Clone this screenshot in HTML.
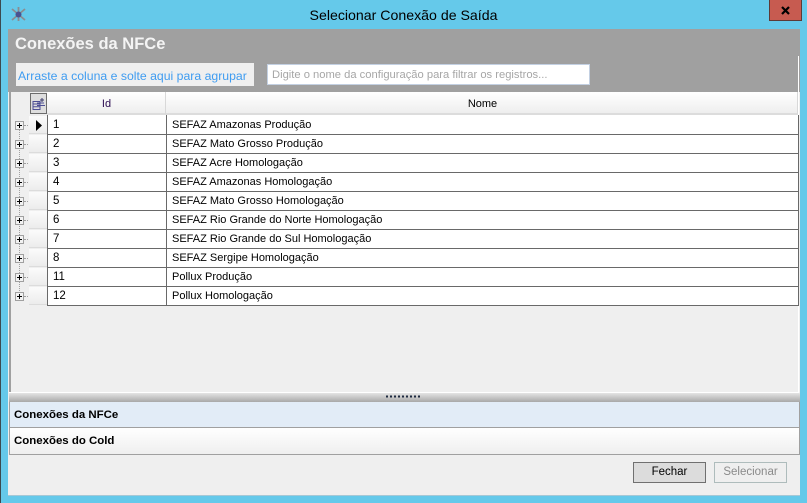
<!DOCTYPE html>
<html><head><meta charset="utf-8"><style>
html,body{margin:0;padding:0}
body{width:807px;height:503px;position:relative;overflow:hidden;background:#65c9ea;font-family:"Liberation Sans",sans-serif;color:#000}
div{position:absolute;box-sizing:border-box;white-space:nowrap}
.rh{left:29px;width:18px;height:18px;background:linear-gradient(#fbfbfb,#ececec);border-bottom:1px solid #dcdcdc}
.exp{left:15px;width:9px;height:9px;border:1px solid #a0a0a0;background:#f2f2f2}
.exp:before{content:"";position:absolute;left:1px;top:3px;width:5px;height:1px;background:#000}
.exp:after{content:"";position:absolute;left:3px;top:1px;width:1px;height:5px;background:#000}
.dh{left:24px;width:4px;height:0;border-top:1px dotted #a0a0a0}
.hl{left:47px;width:752px;height:1px;background:#696969}
.t{font-size:11px;line-height:14px;height:14px}
.id{left:53px;font-size:11.500px}.nm{left:172px}
</style></head><body>
<div style="left:0;top:0;width:1px;height:503px;background:#3c4a50"></div>
<div style="left:769px;top:0;width:33px;height:21px;background:#c75b50;border:1px solid #5c3a36;border-top:0"></div>
<svg style="position:absolute;left:780px;top:4px" width="12" height="12"><path d="M2 3L9 10M9 3L2 10" stroke="#000" stroke-width="2.2" fill="none"/></svg>
<svg style="position:absolute;left:10px;top:6px" width="17" height="17"><path d="M2 3L15 14M15 3L2 14M8.500 1V15" stroke="#8a8c90" stroke-width="1.800"/><circle cx="8.500" cy="8.500" r="3" fill="#4a5290"/></svg>
<div style="left:0;width:807px;top:7px;text-align:center;font-size:14.150px;line-height:17px">Selecionar Conexão de Saída</div>

<div style="left:8px;top:29px;width:792px;height:467px;background:#efefef;border-bottom:1px solid #a5c8d6"></div>
<div style="left:8px;top:29px;width:792px;height:63px;background:#a0a0a0"></div>
<div style="left:15px;top:35px;font-size:16.500px;line-height:18px;font-weight:bold;color:#f4f4f4">Conexões da NFCe</div>
<div style="left:16px;top:63px;width:238px;height:23px;background:#efefef"></div>
<div style="left:18px;top:69px;font-size:12.250px;line-height:14px;color:#3f9cf0">Arraste a coluna e solte aqui para agrupar</div>
<div style="left:267px;top:64px;width:323px;height:21px;background:#fff;border:1px solid #c3d0e2"></div>
<div style="left:272px;top:68px;font-size:11.200px;line-height:14px;color:#a6a6a6">Digite o nome da configuração para filtrar os registros...</div>

<div style="left:9px;top:92px;width:2px;height:301px;background:#a0a0a0"></div>
<div style="left:11px;top:92px;width:787px;height:300px;background:#efefef"></div>
<div style="left:798px;top:56px;width:1px;height:336px;background:#fff"></div>
<div style="left:47px;top:92px;width:119px;height:23px;background:linear-gradient(#fff,#eeeeee);border-right:1px solid #d8d8d8;border-bottom:2px solid #dcdcdc"></div>
<div style="left:166px;top:92px;width:632px;height:23px;background:linear-gradient(#fff,#eeeeee);border-right:1px solid #d8d8d8;border-bottom:2px solid #dcdcdc"></div>
<div style="left:30px;top:93px;width:17px;height:21px;background:#dedede;border:1px solid #6c6c6c"></div>
<svg style="position:absolute;left:32px;top:97px" width="14" height="14" fill="none"><path d="M1 4.500H8V12.500H1ZM1 7H8M1 9.700H8M5 6H12M5 8.500H13" stroke="#4d4f95"/><path d="M10 1V5M8 3H12" stroke="#3a3a6a"/></svg>
<div class="t" style="left:47px;width:119px;top:97px;text-align:center;color:#2a0a50">Id</div>
<div class="t" style="left:166px;width:632px;top:97px;text-align:center;padding-left:1px">Nome</div>

<div style="left:47px;top:115px;width:752px;height:191px;background:#fff"></div>
<div style="left:47px;top:115px;width:1px;height:191px;background:#696969"></div>
<div style="left:166px;top:115px;width:1px;height:191px;background:#696969"></div>
<div style="left:798px;top:115px;width:1px;height:191px;background:#696969"></div>
<div style="left:19px;top:125px;width:0;height:172px;border-left:1px dotted #a0a0a0"></div>

<div class="hl" style="top:134px"></div><div class="hl" style="top:153px"></div><div class="hl" style="top:172px"></div><div class="hl" style="top:191px"></div><div class="hl" style="top:210px"></div><div class="hl" style="top:229px"></div><div class="hl" style="top:248px"></div><div class="hl" style="top:267px"></div><div class="hl" style="top:286px"></div><div class="hl" style="top:305px"></div>

<div class="rh" style="top:116px"></div><div class="rh" style="top:135px"></div><div class="rh" style="top:154px"></div><div class="rh" style="top:173px"></div><div class="rh" style="top:192px"></div><div class="rh" style="top:211px"></div><div class="rh" style="top:230px"></div><div class="rh" style="top:249px"></div><div class="rh" style="top:268px"></div><div class="rh" style="top:287px"></div>
<svg style="position:absolute;left:36px;top:120px" width="6" height="11"><path d="M0 0L6 5.500L0 11Z" fill="#000"/></svg>

<div class="dh" style="top:125px"></div><div class="dh" style="top:144px"></div><div class="dh" style="top:163px"></div><div class="dh" style="top:182px"></div><div class="dh" style="top:201px"></div><div class="dh" style="top:220px"></div><div class="dh" style="top:239px"></div><div class="dh" style="top:258px"></div><div class="dh" style="top:277px"></div><div class="dh" style="top:296px"></div>
<div class="exp" style="top:121px"></div><div class="exp" style="top:140px"></div><div class="exp" style="top:159px"></div><div class="exp" style="top:178px"></div><div class="exp" style="top:197px"></div><div class="exp" style="top:216px"></div><div class="exp" style="top:235px"></div><div class="exp" style="top:254px"></div><div class="exp" style="top:273px"></div><div class="exp" style="top:292px"></div>

<div class="t id" style="top:118px">1</div><div class="t nm" style="top:118px">SEFAZ Amazonas Produção</div>
<div class="t id" style="top:137px">2</div><div class="t nm" style="top:137px">SEFAZ Mato Grosso Produção</div>
<div class="t id" style="top:156px">3</div><div class="t nm" style="top:156px">SEFAZ Acre Homologação</div>
<div class="t id" style="top:175px">4</div><div class="t nm" style="top:175px">SEFAZ Amazonas Homologação</div>
<div class="t id" style="top:194px">5</div><div class="t nm" style="top:194px">SEFAZ Mato Grosso Homologação</div>
<div class="t id" style="top:213px">6</div><div class="t nm" style="top:213px">SEFAZ Rio Grande do Norte Homologação</div>
<div class="t id" style="top:232px">7</div><div class="t nm" style="top:232px">SEFAZ Rio Grande do Sul Homologação</div>
<div class="t id" style="top:251px">8</div><div class="t nm" style="top:251px">SEFAZ Sergipe Homologação</div>
<div class="t id" style="top:270px">11</div><div class="t nm" style="top:270px">Pollux Produção</div>
<div class="t id" style="top:289px">12</div><div class="t nm" style="top:289px">Pollux Homologação</div>

<div style="left:9px;top:393px;width:791px;height:9px;background:linear-gradient(#e4e4e4,#a8a8a8)"></div>
<div style="left:9px;top:392px;width:790px;height:1px;background:#fff"></div>
<svg style="position:absolute;left:386px;top:395px" width="36" height="4"><path d="M0 1.500H34" stroke="#1e2a40" stroke-width="2" stroke-dasharray="2 2"/></svg>
<div style="left:9px;top:402px;width:791px;height:26px;background:#e2ecf7;border-bottom:1px solid #a0a0a0;border-left:1px solid #a0a0a0;border-right:1px solid #a0a0a0"></div>
<div style="left:9px;top:428px;width:791px;height:27px;background:linear-gradient(#fff,#efefef);border-bottom:1px solid #a0a0a0;border-left:1px solid #a0a0a0;border-right:1px solid #a0a0a0"></div>
<div style="left:14px;top:408px;font-size:11.450px;line-height:14px;font-weight:bold;color:#000">Conexões da NFCe</div>
<div style="left:14px;top:434px;font-size:11.450px;line-height:14px;font-weight:bold;color:#000">Conexões do Cold</div>

<div style="left:633px;top:462px;width:73px;height:21px;background:#dcdcdc;border:1px solid #707070;text-align:center;font-size:11.500px;line-height:19px">Fechar</div>
<div style="left:714px;top:462px;width:73px;height:21px;background:#efefef;border:1px solid #aebcbc;text-align:center;font-size:11.500px;line-height:19px;color:#8a8a8a">Selecionar</div>
</body></html>
